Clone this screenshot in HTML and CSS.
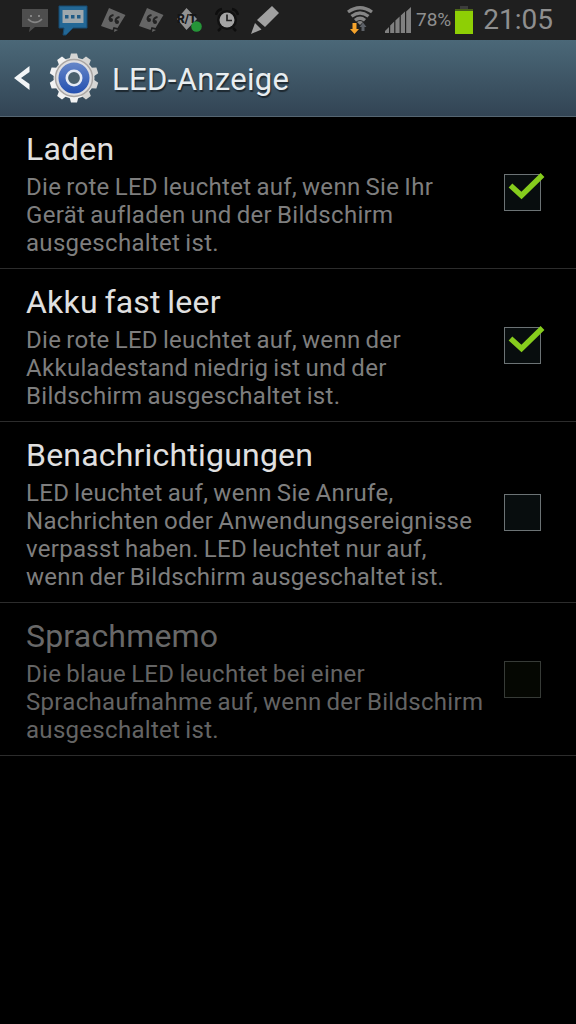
FILE: index.html
```
<!DOCTYPE html>
<html lang="de">
<head>
  <meta charset="UTF-8" />
  <meta name="viewport" content="width=device-width, initial-scale=1.0"/>
  <title>LED-Anzeige</title>
  <link rel="stylesheet" href="styles.css">
</head>
<body>
  <!-- Status bar -->
  <div class="status-bar">
    <div class="notifications">
      <svg class="icon" width="26" height="26" viewBox="0 0 26 26">
        <path d="M0 2h26v18H13l-6 5 1-5H0z" fill="#4e4e4e"/>
        <path d="M6 12q7 7 14 0" fill="none" stroke="#858585" stroke-width="1.700"/>
        <path d="M8 8h2v2H8zM16 8h2v2h-2z" fill="#858585"/>
      </svg>
      <svg class="icon talk" width="30" height="32" viewBox="0 0 30 32">
        <path d="M1 2h28v22H15l-7 7H5l1-7H1z" fill="#236795" stroke="#174a70"/>
        <path d="M4.500 6h21v13h-21z" fill="#9fa8ad"/>
        <path d="M7 11h3.500v3.500H7zM13 11h3.500v3.500H13zM19 11h3.500v3.500H19z" fill="#205a85"/>
      </svg>
      <svg class="icon" width="26" height="26" viewBox="0 0 26 26">
        <path d="M8 1l16.500 7-8 13-4-1-1 3L0 19z" fill="#656565"/>
        <path d="M12.500 8q-4.500 1-4 5M18.500 10q-4.500 1-4 5" fill="none" stroke="#232323" stroke-width="1.800"/>
        <circle cx="10" cy="13" r="2" fill="#232323"/>
        <circle cx="16" cy="15" r="2" fill="#232323"/>
        <path d="M13.500 22l3.500 1-4 2z" fill="#656565"/>
      </svg>
      <svg class="icon" width="26" height="26" viewBox="0 0 26 26">
        <path d="M8 1l16.500 7-8 13-4-1-1 3L0 19z" fill="#656565"/>
        <path d="M12.500 8q-4.500 1-4 5M18.500 10q-4.500 1-4 5" fill="none" stroke="#232323" stroke-width="1.800"/>
        <circle cx="10" cy="13" r="2" fill="#232323"/>
        <circle cx="16" cy="15" r="2" fill="#232323"/>
        <path d="M13.500 22l3.500 1-4 2z" fill="#656565"/>
      </svg>
      <svg class="icon" width="26" height="26" viewBox="0 0 26 26">
        <path d="M9.500 1l10.500 11-10.500 11L0 12z" fill="#929292"/>
        <text class="rt" x="0" y="16">R/T</text>
        <circle cx="19.500" cy="19.500" r="5.300" fill="#259438"/>
      </svg>
      <svg class="icon" width="24" height="26" viewBox="0 0 24 26">
        <circle cx="12" cy="13" r="10" fill="#111"/>
        <path d="M1 8q1-5 6-6M23 8q-1-5-6-6M6 21l-3 3M18 21l3 3" fill="none" stroke="#0e0e0e" stroke-width="2.500"/>
        <circle cx="12" cy="13" r="7.500" fill="#a4a4a4"/>
        <path d="M12 7.500v6h5" fill="none" stroke="#222" stroke-width="1.700"/>
      </svg>
      <svg class="icon" width="30" height="30" viewBox="0 0 30 30">
        <path d="M21 1l7 7-14 14-8-7z" fill="#a0a0a0"/>
        <path d="M4 18l6.500 6.500L0 29z" fill="#a0a0a0"/>
      </svg>
    </div>
    <div class="system">
      <svg class="wifi" width="28" height="32" viewBox="0 0 28 32">
        <g fill="none" stroke="#858585" stroke-width="3.300">
          <path d="M1 8q12-8.500 24 0"/>
          <path d="M4.500 12.200q8.500-6.500 17 0"/>
          <path d="M8 16.200q5-4 10 0"/>
        </g>
        <path d="M10 18q3-2 6 0l-3 3z" fill="#858585"/>
        <path d="M5.500 19h4v6H12L7.500 30 3 25h2.500z" fill="#f5a32b"/>
        <path d="M14.500 27v-4h-2l3.500-4.500 3.500 4.500h-2v4z" fill="#5d6167"/>
      </svg>
      <svg class="signal" width="27" height="27" viewBox="0 0 27 27">
        <path d="M0 26v-2l4-4v6zM5.200 26v-7.500l4-4V26zM10.400 26V13.500l4.200-4V26zM15.800 26V8.500l4.200-4V26zM21.200 26V4.500L26 0v26z" fill="#808080"/>
      </svg>
      <span class="percent">78%</span>
      <svg class="battery" width="20" height="29" viewBox="0 0 20 29">
        <path d="M6 0h8v3H6z" fill="#3c3c3c"/>
        <path d="M1 3h18v4H1z" fill="#4a6318"/>
        <path d="M1 5h18v23H1z" fill="#8ecf05"/>
      </svg>
      <span class="clock">21:05</span>
    </div>
  </div>

  <!-- Action bar -->
  <header class="action-bar">
    <svg class="back" width="18" height="28" viewBox="0 0 18 28">
      <path d="M15.500 2v6L7 14l8.500 6v6L0 14z" fill="#f2f5f7"/>
    </svg>
    <svg class="gear" width="50" height="50" viewBox="0 0 50 50">
      <defs>
        <linearGradient id="metal" x1="0" y1="0" x2="0" y2="1">
          <stop offset="0" stop-color="#d4d4d2"/>
          <stop offset="1" stop-color="#f4f4f4"/>
        </linearGradient>
        <linearGradient id="blue" x1="0" y1="0" x2="0" y2="1">
          <stop offset="0" stop-color="#6586c8"/>
          <stop offset="1" stop-color="#2450b0"/>
        </linearGradient>
      </defs>
      <g fill="url(#metal)">
        <circle cx="25" cy="25" r="20.500"/>
        <path d="M20.500 6l1.500-5.500h6L29.500 6v38L28 49.500h-6L20.500 44z"/>
        <path d="M20.500 6l1.500-5.500h6L29.500 6v38L28 49.500h-6L20.500 44z" transform="rotate(36 25 25)"/>
        <path d="M20.500 6l1.500-5.500h6L29.500 6v38L28 49.500h-6L20.500 44z" transform="rotate(72 25 25)"/>
        <path d="M20.500 6l1.500-5.500h6L29.500 6v38L28 49.500h-6L20.500 44z" transform="rotate(108 25 25)"/>
        <path d="M20.500 6l1.500-5.500h6L29.500 6v38L28 49.500h-6L20.500 44z" transform="rotate(144 25 25)"/>
      </g>
      <circle cx="25" cy="25" r="18.500" fill="#dedee0" stroke="#aaa6a3" stroke-width="1.500"/>
      <circle cx="25" cy="25" r="15.500" fill="url(#blue)"/>
      <circle cx="25" cy="25" r="7.200" fill="#4a606c" stroke="#e4eaf4" stroke-width="2.600"/>
    </svg>
    <h1>LED-Anzeige</h1>
  </header>

  <!-- Settings -->
  <main class="settings">
    <label class="setting">
      <span class="setting-text">
        <span class="title">Laden</span>
        <span class="summary">Die rote LED leuchtet auf, wenn Sie Ihr<br>Gerät aufladen und der Bildschirm<br>ausgeschaltet ist.</span>
      </span>
      <span class="checkbox">
        <svg class="check" width="40" height="30" viewBox="0 0 40 30"><path d="M3.500 12.500l11 10L35.500 2" fill="none" stroke="#86cc1d" stroke-width="5.500"/></svg>
      </span>
    </label>
    <label class="setting">
      <span class="setting-text">
        <span class="title">Akku fast leer</span>
        <span class="summary">Die rote LED leuchtet auf, wenn der<br>Akkuladestand niedrig ist und der<br>Bildschirm ausgeschaltet ist.</span>
      </span>
      <span class="checkbox">
        <svg class="check" width="40" height="30" viewBox="0 0 40 30"><path d="M3.500 12.500l11 10L35.500 2" fill="none" stroke="#86cc1d" stroke-width="5.500"/></svg>
      </span>
    </label>
    <label class="setting">
      <span class="setting-text">
        <span class="title">Benachrichtigungen</span>
        <span class="summary">LED leuchtet auf, wenn Sie Anrufe,<br>Nachrichten oder Anwendungsereignisse<br>verpasst haben. LED leuchtet nur auf,<br>wenn der Bildschirm ausgeschaltet ist.</span>
      </span>
      <span class="checkbox"></span>
    </label>
    <label class="setting disabled">
      <span class="setting-text">
        <span class="title">Sprachmemo</span>
        <span class="summary">Die blaue LED leuchtet bei einer<br>Sprachaufnahme auf, wenn der Bildschirm<br>ausgeschaltet ist.</span>
      </span>
      <span class="checkbox"></span>
    </label>
  </main>
</body>
</html>
```
FILE: styles.css
```
:root {
  --text-color: #e0e0e0;
  --summary-color: #7e7e7e;
  --divider: #2c2c2c;
}

* {
  box-sizing: border-box;
}

body {
  font-family: Roboto, 'Liberation Sans', sans-serif;
  margin: 0;
  min-height: 100vh;
  background: #000;
  color: var(--text-color);
  overflow: hidden;
}

svg {
  display: block;
  flex: none;
}

/* Status bar */
.status-bar {
  display: flex;
  justify-content: space-between;
  height: 40px;
  padding: 0 23px 0 22px;
  background: #1f1f1f;
  color: #8f8f8f;
}

.notifications,
.system {
  display: flex;
  align-items: center;
}

.notifications {
  gap: 12px;
}

.talk {
  margin: 0 1px 0 -2px;
}

.rt {
  font-size: 12px;
  font-weight: 900;
  fill: #151515;
}

.wifi {
  margin-right: 10px;
}

.signal {
  margin-right: 4px;
}

.percent {
  font-size: 19px;
  line-height: 40px;
}

.battery {
  margin: 0 9px 0 3px;
}

.clock {
  font-size: 28px;
  line-height: 40px;
}

/* Action bar */
.action-bar {
  display: flex;
  align-items: center;
  height: 77px;
  padding-left: 14px;
  background: linear-gradient(#4b6878, #324454);
  border-bottom: 1px solid #566672;
}

.gear {
  margin: 0 13px 0 17px;
}

h1 {
  margin: 0;
  padding-top: 2px;
  font-size: 31px;
  font-weight: 400;
  letter-spacing: 0.35px;
  color: #e8edf0;
  text-shadow: 1px 2px 1px rgba(0, 0, 0, 0.5);
}

/* Settings list */
.settings {
  margin-top: -1px;
}

.setting {
  display: flex;
  align-items: center;
  justify-content: space-between;
  padding: 12px 35px 11px 26px;
  border-bottom: 1px solid var(--divider);
}

.title,
.summary {
  display: block;
  white-space: nowrap;
}

.title {
  margin-bottom: 3px;
  font-size: 32px;
  line-height: 42px;
  letter-spacing: 0.2px;
  word-spacing: -1.5px;
}

.summary {
  font-size: 24px;
  line-height: 28px;
  letter-spacing: 0.3px;
  word-spacing: -1.2px;
  color: var(--summary-color);
}

.checkbox {
  position: relative;
  width: 37px;
  height: 37px;
  margin-bottom: 1px;
  flex: none;
  background: #080d0e;
  border: 1px solid #6c7375;
}

.check {
  position: absolute;
  top: -2px;
  left: 2px;
}

.disabled {
  color: #686868;
}

.disabled .summary {
  color: #646464;
}

.disabled .checkbox {
  background: #050702;
  border-color: #373b37;
}
```
